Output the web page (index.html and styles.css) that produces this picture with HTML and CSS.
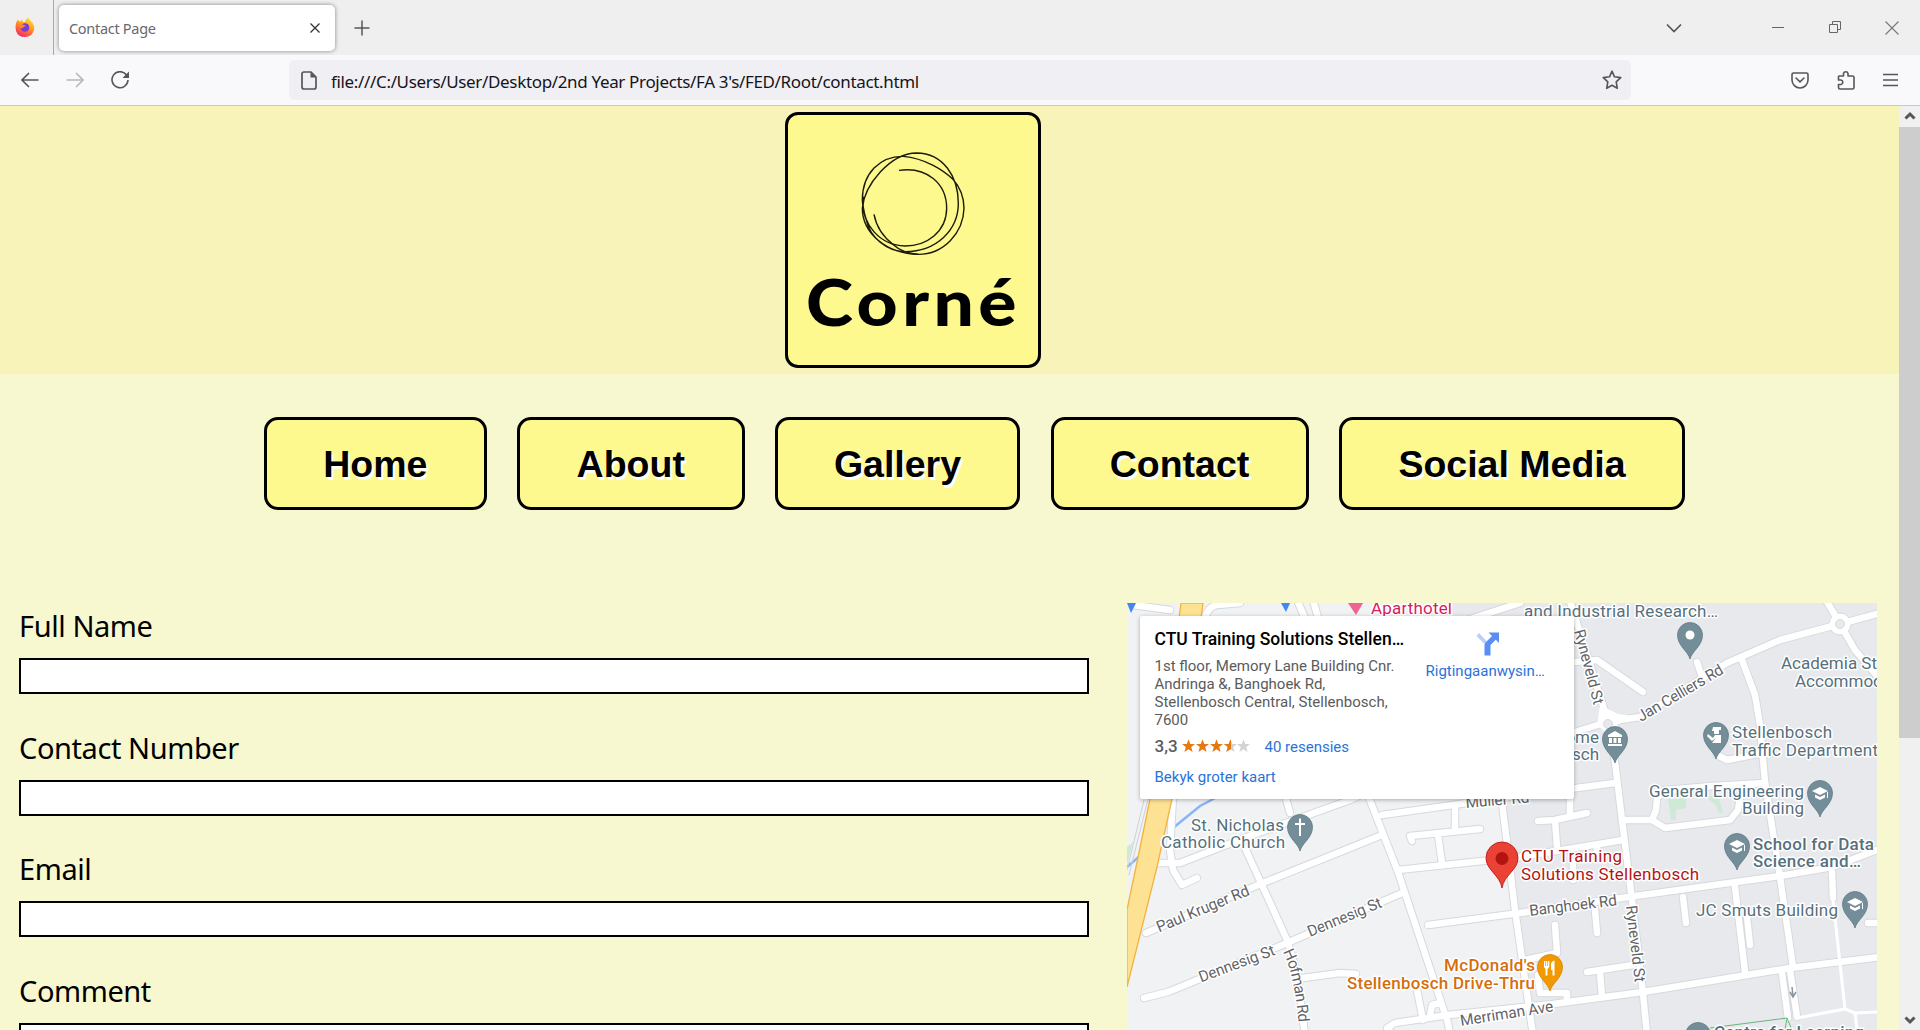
FILE: index.html
```html
<!DOCTYPE html>
<html lang="en">
<head>
<meta charset="utf-8">
<title>Contact Page</title>
<link rel="stylesheet" href="styles.css">
</head>
<body>
<div class="tabbar">
  <div class="brand">
    <svg width="20" height="21" viewBox="0 0 20 21">
      <defs>
        <linearGradient id="fx" x1="0.8" y1="0" x2="0.3" y2="1"><stop offset="0" stop-color="#ffe94a"/><stop offset=".45" stop-color="#ff9a1f"/><stop offset="1" stop-color="#f5256a"/></linearGradient>
      </defs>
      <path d="M1 6 L3 2.500 L5 5 L7 2.500 L8 5 Q11 5 10.500 3 L13 .5 Q15 3 17 5 Q20 9 19 13 Q17 20 10 20 Q3 20 1 14 Q0 10 1 6Z" fill="url(#fx)"/>
      <circle cx="10" cy="10.500" r="4.300" fill="#7a3bd0"/>
      <path d="M3 8 Q7 6 11 9 Q8 9.500 8 11 Q5 12 3 8Z" fill="#ff8a1a"/>
    </svg>
  </div>
  <div class="tab"><span>Contact Page</span>
    <svg width="10" height="10" viewBox="0 0 10 10"><path d="M.5 .5 9.500 9.500M9.500 .5 .5 9.500" stroke="#333" stroke-width="1.300" fill="none"/></svg>
  </div>
  <svg class="plus" width="16" height="16" viewBox="0 0 16 16"><path d="M8 .5V15.500M.5 8H15.500" stroke="#55555c" stroke-width="1.500"/></svg>
  <div class="window-controls">
    <svg width="16" height="10" viewBox="0 0 16 10"><path d="M1 1.500 8 8.500 15 1.500" stroke="#55555c" stroke-width="1.700" fill="none"/></svg>
    <svg width="12" height="12" viewBox="0 0 12 12"><path d="M0 5.500H12" stroke="#666"/></svg>
    <svg width="13" height="13" viewBox="0 0 13 13"><path d="M.5 3.500H8.500V11.500H.5ZM3.500 3.500V.5H11.500V8.500H8.500" stroke="#666" fill="none"/></svg>
    <svg width="14" height="14" viewBox="0 0 14 14"><path d="M.5 .5 13.500 13.500M13.500 .5 .5 13.500" stroke="#777" stroke-width="1.100"/></svg>
  </div>
</div>
<div class="toolbar">
  <div class="history">
    <svg width="18" height="16" viewBox="0 0 18 16"><path d="M17.500 8H1M8 1 1 8 8 15" stroke="#55555c" stroke-width="1.600" fill="none"/></svg>
    <svg width="18" height="16" viewBox="0 0 18 16"><path d="M.5 8H17M10 1 17 8 10 15" stroke="#b8b8bc" stroke-width="1.600" fill="none"/></svg>
    <svg width="18" height="18" viewBox="0 0 18 18"><path d="M15.500 4A8 8 0 1 0 17 9" stroke="#55555c" stroke-width="1.600" fill="none"/><path d="M18 .5V7H11.500Z" fill="#55555c"/></svg>
  </div>
  <div class="urlbar">
    <svg width="16" height="19" viewBox="0 0 16 19"><path d="M3 1H10L15 6V16Q15 18 13 18H3Q1 18 1 16V3Q1 1 3 1Z" stroke="#55555c" stroke-width="1.700" fill="none"/><path d="M9.500 1V6.500H15Z" fill="#55555c"/></svg>
    <span>file:///C:/Users/User/Desktop/2nd Year Projects/FA 3's/FED/Root/contact.html</span>
    <svg class="star" width="20" height="20" viewBox="0 0 20 20"><path d="M10 1.200 12.500 6.800 18.700 7.600 14.200 11.900 15.300 18.300 10 15.300 4.700 18.300 5.800 11.900 1.300 7.600 7.500 6.800Z" stroke="#55555c" stroke-width="1.600" stroke-linejoin="round" fill="none"/></svg>
  </div>
  <div class="tools">
    <svg width="18" height="17" viewBox="0 0 18 17"><path d="M2.500 1H15.500Q17 1 17 2.500V8A8 8 0 0 1 1 8V2.500Q1 1 2.500 1ZM5 6 9 9.800 13 6" stroke="#55555c" stroke-width="1.600" fill="none" stroke-linecap="round" stroke-linejoin="round"/></svg>
    <svg width="18" height="20" viewBox="0 0 18 20"><path d="M2 6H6.500V3.500A2.300 2.300 0 0 1 11 3.500V6H15.500Q17 6 17 7.500V17.500Q17 19 15.500 19H3Q1.500 19 1.500 17.500V14.500H4A2.300 2.300 0 0 0 4 10H1.500V6.500Z" stroke="#55555c" stroke-width="1.600" fill="none" stroke-linejoin="round"/></svg>
    <svg width="15" height="14" viewBox="0 0 15 14"><path d="M0 1.500H15M0 7H15M0 12.500H15" stroke="#55555c" stroke-width="1.500"/></svg>
  </div>
</div>
<div class="viewport">
  <div class="page">
    <header class="banner">
      <div class="logo">
        <svg width="250" height="250" viewBox="788 115 250 250">
          <g transform="translate(770 100) scale(.33333)" fill="none" stroke="#1c1b08" stroke-width="4.200">
            <path d="M387 211 C470 199 530 250 530 325 C530 395 470 438 405 438 C330 436 277 375 277 300 C277 220 330 168 400 169 C465 175 520 210 549 238 C572 264 582 290 582 325 C580 400 520 463 445 463 C350 462 277 400 277 325 C283 255 360 160 440 159 C520 160 565 230 565 310 C565 390 500 455 405 455 C350 455 300 412 289 360 C278 325 277 305 280 290"/>
            <path d="M312 343 C320 385 345 415 371 435 C385 448 410 460 445 463"/>
          </g>
          <text x="806" y="326" class="logo-text" textLength="215" lengthAdjust="spacingAndGlyphs">Corné</text>
        </svg>
      </div>
    </header>
    <nav class="nav">
      <a class="home">Home</a><a class="about">About</a><a class="gallery">Gallery</a><a class="contact">Contact</a><a class="social">Social Media</a>
    </nav>
    <main class="content">
      <form class="form">
        <label><span>Full Name</span><input type="text"></label>
        <label><span>Contact Number</span><input type="text"></label>
        <label><span>Email</span><input type="text"></label>
        <label><span>Comment</span><input type="text"></label>
      </form>
      <div class="map">
        <svg class="map-canvas" width="750" height="427" viewBox="1127 603 750 427">
          <defs>
            <path id="pin" d="M0 24 C-2 16 -12.500 11 -12.500 0 A12.500 12.500 0 0 1 12.500 0 C12.500 11 2 16 0 24Z"/>
            <path id="cap" d="M-8 -2 0 -6 8 -2 0 2ZM-5 1.500 0 4 5 1.500V4.500L0 7-5 4.500ZM7 -1H8V5H7Z"/>
            <path id="hofman" d="M1283 952 Q1295 975 1299 1028"/>
            <g id="roads">
              <path d="M1146 933 1258 885 1382 835"/>
              <path d="M1144 998 1168 992 1287 943 1402 893"/>
              <path d="M1245 848 1262 885 1287 940 1297 973 1305 1035"/>
              <path d="M1158 863H1180L1247 837 1350 800 1375 788"/>
              <path d="M1173 795 1170 850 1173 870 1182 885 1197 878"/>
              <path d="M1285 795 1290 813"/>
              <path d="M1366 790 1398 872 1448 1023 1450 1035"/>
              <path d="M1382 815 1453 805 1530 794 1615 783"/>
              <path d="M1398 870 1520 857 1623 840"/>
              <path d="M1455 808V830M1412 841 1410 836 1480 829M1438 835 1442 863"/>
              <path d="M1428 925 1520 913 1628 897 1780 876 1832 867 1877 850"/>
              <path d="M1568 595 1607 718 1615 762 1622 820 1632 900 1643 993 1647 1035"/>
              <path d="M1742 660 1755 695 1760 725 1765 782 1780 877 1793 967"/>
              <path d="M1575 732 1607 722 1640 717 1727 663 1780 640 1840 624 1880 613"/>
              <path d="M1826 600 1840 624 1855 650 1877 676"/>
              <path d="M1575 662 1597 660 1643 692M1697 662 1702 677"/>
              <path d="M1717 755 1727 760 1763 753"/>
              <path d="M1765 783 1713 786 1665 790 1657 798 1656 810 1652 820 1665 828 1730 820 1738 810 1742 785M1622 820H1652"/>
              <path d="M1501 795 1507 843 1515 910 1533 1035"/>
              <path d="M1555 820 1557 847M1538 821 1555 820 1587 813M1570 785V815"/>
              <path d="M1595 910 1597 933M1555 925 1557 953 1525 960M1683 897 1686 923M1735 887 1745 972M1747 917 1750 945M1832 872 1833 898M1868 923H1880M1597 845V855M1573 862V880"/>
              <path d="M1390 1031 1387 1028 1395 1023 1448 1015 1553 1004 1643 992 1790 968 1880 957"/>
              <path d="M1587 972 1633 965M1600 972 1602 997M1782 973 1788 1018M1790 970 1797 1017M1303 978 1340 973 1356 974M1416 985 1423 1020M1440 1003 1432 1005 1430 1016M1538 975 1540 993H1567V1000"/>
              <path d="M1297 600 1308 625M1313 600 1320 625M1203 625Q1206 607 1217 605L1240 603M1133 605 1170 610M1455 624 1520 603"/>
            </g>
          </defs>
          <rect x="1127" y="603" width="750" height="427" fill="#f0f2f4"/>
          <path d="M1450 603H1877V1030H1533L1515 910 1501 800Z" fill="#e8e9ed"/>
          <path d="M1127 847 1133 842 1127 865Z" fill="#ceead6"/>
          <path d="M1127 867 1141 855M1173 828 1200 806 1217 797" stroke="#8ab4f8" stroke-width="2.500" fill="none"/>
          <path d="M1149 795 1129 875M1144 800 1127 870" stroke="#cdd2d7" fill="none"/>
          <path d="M1668 799 1686 798V808L1676 810V820H1671ZM1707 797 1718 795 1723 813H1719L1716 806Z" fill="#ceead6"/>
          <use href="#roads" class="casing"/>
          <circle cx="1840" cy="624" r="11" fill="#fff" stroke="#d6d9dd"/>
          <use href="#roads" class="fill"/>
          <path d="M1600 705 1597 725 1612 738 1618 724 1640 717 1618 714Z" fill="#fff"/>
          <circle cx="1608" cy="724" r="4.500" fill="#e8e9ed" stroke="#d6d9dd"/>
          <circle cx="1840" cy="624" r="10" fill="#fff"/><circle cx="1840" cy="624" r="4.500" fill="#e8e9ed" stroke="#d6d9dd"/>
          <path d="M1833 900 1845 1009M1797 1018 1845 1009 1855 1013 1877 1012M1855 1013 1857 1030" class="path-thin"/>
          <path d="M1710 1028 1787 1018 1785 1030M1787 1018 1792 1030" fill="none" stroke="#66b67b"/>
          <path d="M1792 987 1793 996M1790 992 1793 997 1796 992" fill="none" stroke="#8a949d" stroke-width="1.500"/>
          <path d="M1181 603 C1174 660 1160 750 1150 799 L1141 843 1127 910V987L1157 867 1172 799C1182 740 1196 660 1203 603Z" fill="#fde293" stroke="#f3b340" stroke-width="1.300"/>
          <path d="M1127 603H1136L1131 613ZM1281 603H1290L1286 612Z" fill="#4285f4"/>
          <path d="M1348 603H1363L1356 615Z" fill="#f06292"/>

          <g class="street">
            <text transform="translate(1159 932.500) rotate(-22.500)" textLength="99">Paul Kruger Rd</text>
            <text transform="translate(1201 982.500) rotate(-20.500)" textLength="80">Dennesig St</text>
            <text transform="translate(1310 937) rotate(-22.500)" textLength="79">Dennesig St</text>
            <text><textPath href="#hofman" textLength="73">Hofman Rd</textPath></text>
            <text transform="translate(1461 1026) rotate(-9)" textLength="94">Merriman Ave</text>
            <text transform="translate(1530 916) rotate(-7)" textLength="88">Banghoek Rd</text>
            <text transform="translate(1626 906) rotate(83.500)" textLength="77">Ryneveld St</text>
            <text transform="translate(1574 631) rotate(75)" textLength="77">Ryneveld St</text>
            <text transform="translate(1641 722) rotate(-30.500)" textLength="97">Jan Celliers Rd</text>
            <text transform="translate(1466 808) rotate(-5)" textLength="64">Muller Rd</text>
          </g>

          <g fill="#738d99" stroke="#5f7a87" stroke-width=".8">
            <use href="#pin" x="1690" y="635"/><use href="#pin" x="1615" y="739"/><use href="#pin" x="1716" y="735"/><use href="#pin" x="1820" y="793"/><use href="#pin" x="1737" y="846"/><use href="#pin" x="1855" y="904"/><use href="#pin" x="1300" y="827"/><use href="#pin" x="1698" y="1035"/>
          </g>
          <use href="#pin" x="1550" y="967" fill="#f29900" stroke="#d98200" stroke-width=".8"/>
          <g fill="#fff">
            <circle cx="1690" cy="635" r="4.500"/>
            <use href="#cap" x="1820" y="793"/><use href="#cap" x="1737" y="846"/><use href="#cap" x="1855" y="904"/>
            <path d="M1608 737V735L1615 731 1622 735V737ZM1609 738H1612V743H1609ZM1613.500 738H1616.500V743H1613.500ZM1618 738H1621V743H1618ZM1608 744H1622V746H1608Z"/>
            <path d="M1713 727H1721V730H1719V734H1714V731H1712ZM1708 734 1713 738 1715 735H1721V743H1712L1716 738 1712 741 1707 736Z"/>
            <path d="M1299 818.500H1301V823H1305V825H1301V836H1299V825H1295V823H1299Z"/>
            <path d="M1544 961H1545.300V966H1546V961H1547.300V966H1548V961H1549.300V967L1547.500 969V975.500H1545.500V969L1544 967ZM1554.500 960.500V975.500H1552.500V970H1551V964Q1551.500 961 1554.500 960.500Z"/>
          </g>
          <path d="M1502 888 C1500 875 1486 870 1486 858 A16 16 0 0 1 1518 858 C1518 870 1504 875 1502 888Z" fill="#ea4335" stroke="#c5221f"/>
          <circle cx="1502" cy="858.500" r="6.500" fill="#b31412"/>

          <g class="place">
            <text x="1191" y="830.500" textLength="93">St. Nicholas</text>
            <text x="1161" y="847.500" textLength="124">Catholic Church</text>
            <text x="1524" y="616.500" textLength="194">and Industrial Research…</text>
            <text x="1781" y="668.500">Academia Student</text>
            <text x="1795" y="686.500">Accommodation</text>
            <text x="1732" y="738" textLength="100">Stellenbosch</text>
            <text x="1732" y="756" textLength="146">Traffic Department</text>
            <text x="1599" y="742.500" text-anchor="end">ome</text>
            <text x="1599" y="760" text-anchor="end">osch</text>
            <text x="1649" y="796.500" textLength="155">General Engineering</text>
            <text x="1742" y="813.500" textLength="62">Building</text>
            <text x="1696" y="916" textLength="142">JC Smuts Building</text>
            <g class="strong">
              <text x="1753" y="849.500" textLength="121">School for Data</text>
              <text x="1753" y="866.500" textLength="108">Science and…</text>
              <text x="1714" y="1037.500" textLength="150">Centre for Learning</text>
            </g>
            <g class="red"><text x="1521" y="862" textLength="101">CTU Training</text><text x="1521" y="879.500" textLength="178">Solutions Stellenbosch</text></g>
            <g class="orange"><text x="1444" y="970.500" textLength="91">McDonald's</text><text x="1347" y="988.500" textLength="188">Stellenbosch Drive-Thru</text></g>
            <text class="pink" x="1371" y="613.500" textLength="81">Aparthotel</text>
          </g>
        </svg>
        <div class="card">
          <div class="details">
            <h2>CTU Training Solutions Stellen…</h2>
            <p>1st floor, Memory Lane Building Cnr.<br>Andringa &amp;, Banghoek Rd,<br>Stellenbosch Central, Stellenbosch,<br>7600</p>
            <div class="rating"><b>3,3</b>
              <svg width="68" height="14" viewBox="0 0 68 14">
                <defs><path id="st" d="M7 .3 8.700 5.100H13.500L9.700 8.100 11.100 13 7 10.200 2.900 13 4.300 8.100.5 5.100H5.300Z"/>
                <clipPath id="half"><rect x="0" y="0" width="49" height="14"/></clipPath></defs>
                <g fill="#d2d3d5"><use href="#st" x="41.400"/><use href="#st" x="54.500"/></g>
                <g fill="#e7780f" clip-path="url(#half)"><use href="#st" x="-.5"/><use href="#st" x="13.500"/><use href="#st" x="27.500"/><use href="#st" x="41.400"/></g>
              </svg>
              <a>40 resensies</a></div>
            <a class="larger">Bekyk groter kaart</a>
          </div>
          <div class="directions">
            <svg width="24" height="24" viewBox="0 0 24 24"><path d="M3 1 11 9.500V13L8.500 12 .5 4Z" fill="#b9cffb"/><path d="M12.500 .5H23V11L19.800 7.800 14.500 13V23.500H8.500V14Q8.500 11.500 10.500 9.500L16 4Z" fill="#5b8df6"/></svg>
            <a>Rigtingaanwysin…</a>
          </div>
        </div>
      </div>
    </main>
  </div>
  <div class="scrollbar">
    <svg width="12" height="9" viewBox="0 0 12 9"><path d="M1.500 7.500 6 3 10.500 7.500" stroke="#55555c" stroke-width="3" fill="none"/></svg>
    <div class="thumb"></div>
    <svg class="down" width="12" height="9" viewBox="0 0 12 9"><path d="M1.500 1.500 6 6 10.500 1.500" stroke="#55555c" stroke-width="3" fill="none"/></svg>
  </div>
</div>
</body>
</html>
```
FILE: styles.css
```css
* { box-sizing: border-box; }
body {
  margin: 0;
  width: 1920px;
  height: 1030px;
  overflow: hidden;
  display: flex;
  flex-direction: column;
  font-family: "Noto Sans", "Open Sans", sans-serif;
}
svg { display: block; flex: none; }

/* browser chrome */
.tabbar { height: 55px; background: #efefef; display: flex; align-items: center; }
.brand { width: 54px; height: 55px; padding: 17px 0 0 15px; border-right: 1px solid #a9a9ad; }
.tab {
  width: 276px; height: 46px; margin-left: 5px; padding: 0 15px 0 10px;
  background: #fff; border-radius: 5px; box-shadow: 0 0 4px rgba(0, 0, 0, .45);
  display: flex; align-items: center; justify-content: space-between;
  font-size: 14.5px; color: #68686e;
}
.tab span { letter-spacing: -.3px; }
.plus { margin-left: 19px; }
.window-controls { margin-left: auto; padding-right: 21px; display: flex; align-items: center; }
.window-controls svg:nth-child(2) { margin-left: 90px; }
.window-controls svg:nth-child(3) { margin-left: 45px; }
.window-controls svg:nth-child(4) { margin-left: 43px; }
.toolbar { height: 51px; background: #f9f9fb; border-bottom: 1px solid #c8c8cc; display: flex; align-items: center; }
.history { width: 289px; padding-left: 21px; display: flex; align-items: center; gap: 27px; }
.urlbar {
  width: 1342px; height: 40px; padding: 0 9px 0 12px; background: #f0eff4; border-radius: 5px;
  display: flex; align-items: center; font-size: 17px; color: #15141a;
}
.urlbar span { margin-left: 14px; white-space: nowrap; letter-spacing: -.34px; padding-top: 2px; }
.star { margin-left: auto; }
.tools { margin-left: auto; padding-right: 22px; display: flex; align-items: center; gap: 28px; }

/* page */
.viewport { flex: 1; min-height: 0; display: flex; }
.page { width: 1899px; background: #f8f8d0; overflow: hidden; }
.banner { height: 268px; padding-top: 6px; background: #f8f3b8; display: flex; justify-content: center; padding-right: 73px; }
.logo { width: 256px; height: 256px; border: 3px solid #000; border-radius: 13px; background: #fdf98f; }
.logo-text { font: 900 64px Lato, sans-serif; letter-spacing: 4px; fill: #000; }
.nav { display: flex; padding: 43px 0 0 264px; gap: 30.500px; }
.nav a {
  height: 93px; padding-top: 2px; border: 3px solid #000; border-radius: 14px; background: #fdf98f;
  display: flex; align-items: center; justify-content: center;
  font: bold 37.500px "Liberation Sans", sans-serif; color: #000; text-shadow: 2px 3px 1px #fff;
}
.home { width: 222.500px; } .about { width: 227.500px; } .gallery { width: 245px; } .contact { width: 258px; } .social { width: 346px; }
.content { display: flex; justify-content: space-between; padding: 93px 22px 0 19px; }
.form { width: 1070px; display: flex; flex-direction: column; }
.form label { display: block; height: 121.500px; }
.form span { display: block; height: 55px; line-height: 46px; font-size: 29px; letter-spacing: -.42px; color: #000; }
.form input { display: block; width: 100%; height: 36px; border: 2px solid #000; background: #fff; padding: 0; }

/* map */
.map { position: relative; width: 750px; height: 427px; }
.casing, .fill, .path-thin { fill: none; stroke-linecap: round; stroke-linejoin: round; }
.casing { stroke: #d6d9dd; stroke-width: 8.500px; }
.fill { stroke: #fff; stroke-width: 6.500px; }
.path-thin { stroke: #fff; stroke-width: 3px; }
.street, .place { font-family: Roboto, sans-serif; paint-order: stroke; stroke: #fff; stroke-width: 3px; stroke-linejoin: round; }
.street { font-size: 15.500px; fill: #5f6368; }
.place { font-size: 17px; fill: #56707c; }
.strong { font-weight: 500; }
.red { fill: #b31412; }
.orange { fill: #d56e0c; font-weight: 500; }
.pink { fill: #d81b60; }
.card {
  position: absolute; left: 13px; top: 13px; width: 434px; height: 183px; padding: 0 0 0 14.500px;
  background: #fff; border-radius: 2px; box-shadow: 0 1px 4px rgba(0, 0, 0, .3);
  display: flex; font-family: Roboto, sans-serif; font-size: 15px; color: #5b5b5b;
}
.card a { color: #2a73d9; white-space: nowrap; }
.details { width: 271px; padding-top: 13px; }
.card h2 { margin: 0; font-size: 17.500px; line-height: 20px; font-weight: 500; color: #000; white-space: nowrap; }
.card p { margin: 8px 0 0; line-height: 18px; white-space: nowrap; }
.rating { display: flex; align-items: center; height: 24px; margin-top: 5px; }
.rating b { width: 27px; font-weight: 500; font-size: 17px; }
.rating a { margin-left: 15px; padding-top: 1px; }
.larger { display: block; margin-top: 10px; line-height: 18px; }
.directions { padding-top: 16px; }
.directions svg { margin: 0 0 6px 50px; }

/* scrollbar */
.scrollbar { width: 21px; background: #f0f0f0; display: flex; flex-direction: column; align-items: center; padding-top: 5px; }
.thumb { width: 21px; height: 611px; margin-top: 7px; background: #cdcdcd; }
.down { margin-top: auto; margin-bottom: 5px; }
```
